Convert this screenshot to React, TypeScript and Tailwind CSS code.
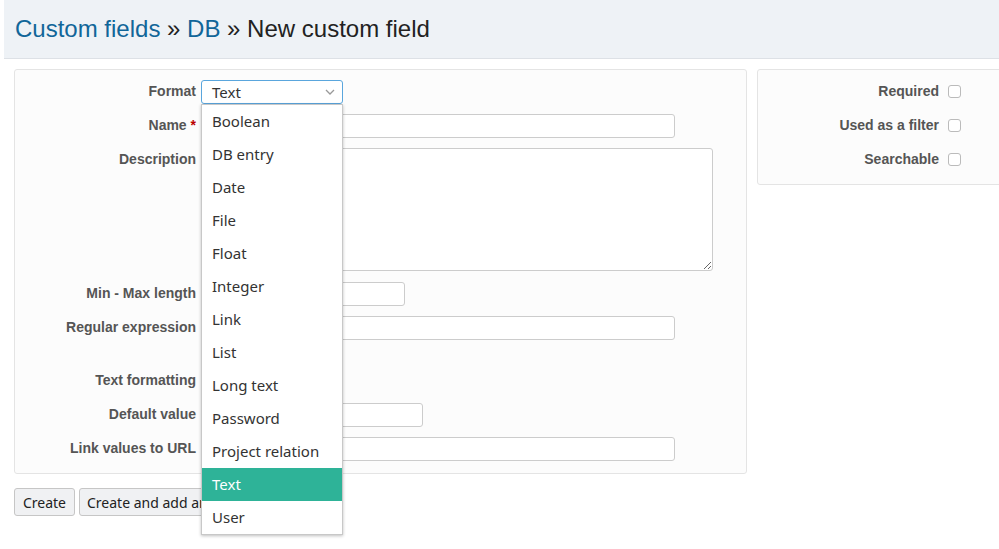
import React from "react";

const labelCls =
  "w-[181px] shrink-0 text-right text-[14px] font-bold leading-[22px] text-[#555] [font-family:'Liberation_Sans',Arial,sans-serif]";

function Input({ w }: { w: string }) {
  return <div className={`h-[24px] ${w} rounded-[3px] border border-[#ccc] bg-white`} />;
}

function Checkbox() {
  return <div className="ml-[4px] mt-[5px] h-[13px] w-[13px] rounded-[3px] border border-[#bbb] bg-white" />;
}

const options = [
  "Boolean",
  "DB entry",
  "Date",
  "File",
  "Float",
  "Integer",
  "Link",
  "List",
  "Long text",
  "Password",
  "Project relation",
  "Text",
  "User",
];

const row = "flex min-h-[24px] gap-[5px]";

export default function App() {
  return (
    <div className="relative h-[549px] w-[999px] overflow-hidden bg-white">
      {/* Header */}
      <div className="ml-[4px] h-[59px] border-b border-[#dde1e6] bg-[#eef2f6] pl-[11px] pt-[15px]">
        <h2 className="text-[24px] leading-[28px] text-[#222] [font-family:'Liberation_Sans',Arial,sans-serif]">
          <span className="text-[#116699]">Custom fields</span> » <span className="text-[#116699]">DB</span> » New custom field
        </h2>
      </div>

      {/* Content */}
      <div className="px-[14px] pt-[10px]">
        <div className="flex gap-[10px]">
          {/* Left box */}
          <div className="w-[733px] shrink-0 rounded-[3px] border border-[#e4e4e4] bg-[#fcfcfc] pb-[12px] pt-[10px]">
            <div className={row}>
              <div className={labelCls}>Format</div>
              <div className="h-[24px] w-[142px]" />
            </div>
            <div className={`mt-[10px] ${row}`}>
              <div className={labelCls}>
                Name <span className="text-[#bb0000]">*</span>
              </div>
              <Input w="w-[474px]" />
            </div>
            <div className={`mt-[10px] ${row}`}>
              <div className={labelCls}>Description</div>
              <textarea className="block h-[123px] w-[512px] rounded-[3px] border border-[#ccc] bg-white outline-none" />
            </div>
            <div className={`mt-[11px] ${row}`}>
              <div className={labelCls}>Min - Max length</div>
              <Input w="w-[204px]" />
            </div>
            <div className={`mt-[10px] h-[43px] ${row}`}>
              <div className={labelCls}>Regular expression</div>
              <Input w="w-[474px]" />
            </div>
            <div className={`mt-[10px] ${row}`}>
              <div className={labelCls}>Text formatting</div>
              <Checkbox />
            </div>
            <div className={`mt-[10px] ${row}`}>
              <div className={labelCls}>Default value</div>
              <Input w="w-[222px]" />
            </div>
            <div className={`mt-[10px] ${row}`}>
              <div className={labelCls}>Link values to URL</div>
              <Input w="w-[474px]" />
            </div>
          </div>

          {/* Right box */}
          <div className="h-[116px] w-[260px] shrink-0 rounded-[3px] border border-[#e4e4e4] bg-[#fcfcfc] pt-[10px]">
            <div className={row}>
              <div className={labelCls}>Required</div>
              <Checkbox />
            </div>
            <div className={`mt-[10px] ${row}`}>
              <div className={labelCls}>Used as a filter</div>
              <Checkbox />
            </div>
            <div className={`mt-[10px] ${row}`}>
              <div className={labelCls}>Searchable</div>
              <Checkbox />
            </div>
          </div>
        </div>

        {/* Buttons */}
        <div className="mt-[14px] flex gap-[4px] [font-family:'Noto_Sans',sans-serif]">
          <button className="h-[28px] w-[61px] rounded-[3px] border border-[#c6c6c6] bg-[#f0f1f3] text-[14px] text-[#222]">
            Create
          </button>
          <button className="h-[28px] whitespace-nowrap rounded-[3px] border border-[#c6c6c6] bg-[#f0f1f3] px-[7px] text-[14px] text-[#222]">
            Create and add another
          </button>
        </div>
      </div>

      {/* Select (open) */}
      <div className="absolute left-[201px] top-[80px] flex h-[24px] w-[142px] items-center justify-between rounded-[3px] border border-[#5aa6dd] bg-white pl-[10px] pr-[6px] text-[15px] text-[#333] [font-family:'Noto_Sans',sans-serif]">
        <span className="leading-[22px]">Text</span>
        <svg width="10" height="6" viewBox="0 0 10 6" className="mr-[1px]">
          <polyline points="1,1 5,5 9,1" fill="none" stroke="#999" strokeWidth="1.3" />
        </svg>
      </div>
      <div className="absolute left-[201px] top-[104px] w-[142px] border border-[#c8c8c8] bg-white shadow-[0_1px_3px_rgba(0,0,0,0.25)] [font-family:'Noto_Sans',sans-serif]">
        {options.map((o) => (
          <div
            key={o}
            className={`h-[33px] pl-[10px] text-[15px] leading-[33px] ${
              o === "Text" ? "bg-[#2eb398] text-white" : "text-[#333]"
            }`}
          >
            {o}
          </div>
        ))}
      </div>
    </div>
  );
}
